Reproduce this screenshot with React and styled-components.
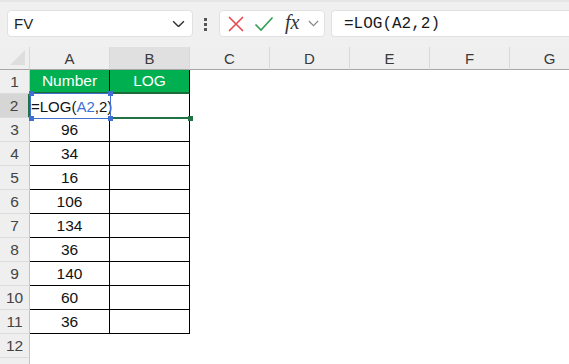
import React from 'react';
import styled, { createGlobalStyle } from 'styled-components';

const GlobalStyle = createGlobalStyle`
  html, body {
    margin: 0;
    padding: 0;
    background: #ffffff;
    overflow: hidden;
  }
  body {
    font-family: "Liberation Sans", Arial, sans-serif;
  }
`;

const Page = styled.div`
  width: 569px;
  height: 364px;
  overflow: hidden;
  position: relative;
`;

const Toolbar = styled.div`
  display: flex;
  align-items: flex-start;
  height: 47px;
  box-sizing: border-box;
  padding: 8px 0 0 7px;
  background: #f0f0f0;
  border-top: 2px solid #e6e6e6;
`;

const Box = styled.div`
  display: flex;
  align-items: center;
  height: 27px;
  box-sizing: border-box;
  background: #ffffff;
  border: 1px solid #e1e1e1;
  border-radius: 4px;
`;

const NameBox = styled(Box)`
  width: 186px;
  padding: 0 7px 0 6px;
  justify-content: space-between;
  font-size: 15px;
  color: #1f1f1f;
`;

const Dots = styled.div`
  display: flex;
  flex-direction: column;
  gap: 2px;
  margin: 8px 12px 0 11px;
  span {
    width: 3px;
    height: 3px;
    background: #555;
  }
`;

const IconBox = styled(Box)`
  width: 106px;
  padding: 0 0 0 7px;
  gap: 9px;
`;

const Fx = styled.span`
  font-family: "Liberation Serif", "Times New Roman", serif;
  font-style: italic;
  font-size: 20px;
  color: #333;
  margin-left: 2px;
  margin-top: -3px;
`;

const FormulaBox = styled(Box)`
  flex: 1;
  margin-left: 6px;
  border-right: none;
  border-radius: 4px 0 0 4px;
  padding-left: 12px;
  font-family: "Liberation Mono", "Courier New", monospace;
  font-size: 16px;
  color: #1a1a1a;
`;

const Sheet = styled.div`
  display: grid;
  grid-template-columns: 30px repeat(7, 80px);
  grid-template-rows: 23px repeat(12, 24px) 30px;
  position: relative;
`;

const Corner = styled.div`
  background: #efefef;
  border-right: 1px solid #d8d8d8;
  border-bottom: 1px solid #a6a6a6;
  position: relative;
  &::after {
    content: '';
    position: absolute;
    right: 4px;
    bottom: 4px;
    border-style: solid;
    border-width: 0 0 15px 15px;
    border-color: transparent transparent #dedede transparent;
  }
`;

const ColHead = styled.div`
  display: flex;
  align-items: center;
  justify-content: center;
  font-size: 15px;
  color: #3a3a3a;
  background: ${(p) => (p.$active ? '#e0e0e0' : '#efefef')};
  border-right: 1px solid #d8d8d8;
  border-bottom: 1px solid #a6a6a6;
  box-sizing: border-box;
`;

const RowHead = styled.div`
  display: flex;
  align-items: center;
  justify-content: center;
  font-size: 15.5px;
  color: #444;
  background: ${(p) => (p.$active ? '#d6d6d6' : '#efefef')};
  border-bottom: 1px solid #dcdcdc;
  border-right: ${(p) => (p.$active ? '2px solid #217346' : '1px solid #c4c4c4')};
  box-sizing: border-box;
`;

const Cell = styled.div`
  display: flex;
  align-items: center;
  justify-content: center;
  box-sizing: border-box;
  font-size: 15.5px;
  color: #111;
  white-space: nowrap;
  background: ${(p) => (p.$head ? '#00b050' : '#ffffff')};
  ${(p) => p.$head && 'color: #ffffff;'}
  ${(p) => p.$table && 'border-right: 1px solid #000; border-bottom: 1px solid #000;'}
  ${(p) => p.$head && 'border-bottom: 2px solid #1d6b3a;'}
`;

const EditCell = styled(Cell)`
  justify-content: flex-start;
  padding-left: 1px;
  overflow: visible;
  position: relative;
  z-index: 2;
  border-right: none;
  border-bottom: none;
  font-size: 15px;
  &::after {
    content: '';
    display: inline-block;
    width: 1px;
    height: 17px;
    margin-left: 1px;
    background: #111;
  }
`;

const Ref = styled.span`
  color: #3f6fd1;
`;

const RangeBox = styled.div`
  position: absolute;
  left: 30px;
  top: 46px;
  width: 81px;
  height: 26px;
  box-sizing: border-box;
  border: 1.5px solid #3f6fd1;
  z-index: 3;
  pointer-events: none;
  span {
    position: absolute;
    width: 5px;
    height: 5px;
    background: #3f6fd1;
  }
`;

const GreenLine = styled.div`
  position: absolute;
  left: 113px;
  top: 70px;
  width: 76px;
  height: 2px;
  background: #217346;
  z-index: 3;
`;

const Handle = styled.div`
  position: absolute;
  left: 188px;
  top: 69px;
  width: 5px;
  height: 5px;
  background: #217346;
  z-index: 3;
`;

const Chevron = ({ size = 12, color = '#444' }) => (
  <svg width={size} height={size * 0.6} viewBox="0 0 12 7" fill="none">
    <path d="M1 1 L6 6 L11 1" stroke={color} strokeWidth="1.3" />
  </svg>
);

const cols = ['A', 'B', 'C', 'D', 'E', 'F', 'G'];
const values = [96, 34, 16, 106, 134, 36, 140, 60, 36];

export default function App() {
  const rows = [];
  for (let r = 1; r <= 13; r++) {
    rows.push(
      <RowHead key={`h${r}`} $active={r === 2}>
        {r <= 12 ? r : ''}
      </RowHead>
    );
    cols.forEach((c, i) => {
      const key = `${c}${r}`;
      if (r === 1 && i < 2) {
        rows.push(
          <Cell key={key} $head $table>
            {i === 0 ? 'Number' : 'LOG'}
          </Cell>
        );
      } else if (r === 2 && i === 0) {
        rows.push(
          <EditCell key={key}>
            =LOG(<Ref>A2</Ref>,2)
          </EditCell>
        );
      } else if (r >= 2 && r <= 11 && i < 2) {
        rows.push(
          <Cell key={key} $table>
            {i === 0 ? values[r - 3] : ''}
          </Cell>
        );
      } else {
        rows.push(<Cell key={key} />);
      }
    });
  }

  return (
    <Page>
      <GlobalStyle />
      <Toolbar>
        <NameBox>
          <span>FV</span>
          <Chevron size={13} color="#333" />
        </NameBox>
        <Dots>
          <span />
          <span />
          <span />
        </Dots>
        <IconBox>
          <svg width="18" height="18" viewBox="0 0 18 18">
            <path d="M2 2 L16 16 M16 2 L2 16" stroke="#e5484d" strokeWidth="1.6" />
          </svg>
          <svg width="20" height="16" viewBox="0 0 20 16">
            <path d="M1.5 8.5 L7 14 L18.5 1.5" stroke="#2f9e52" strokeWidth="1.6" fill="none" />
          </svg>
          <Fx>fx</Fx>
          <Chevron size={11} color="#888" />
        </IconBox>
        <FormulaBox>=LOG(A2,2)</FormulaBox>
      </Toolbar>
      <Sheet>
        <Corner />
        {cols.map((c) => (
          <ColHead key={c} $active={c === 'B'}>
            {c}
          </ColHead>
        ))}
        {rows}
        <RangeBox>
          <span style={{ left: -2, top: -3 }} />
          <span style={{ right: -3, top: -3 }} />
          <span style={{ left: -2, bottom: -3 }} />
          <span style={{ right: -3, bottom: -3 }} />
        </RangeBox>
        <GreenLine />
        <Handle />
      </Sheet>
    </Page>
  );
}
